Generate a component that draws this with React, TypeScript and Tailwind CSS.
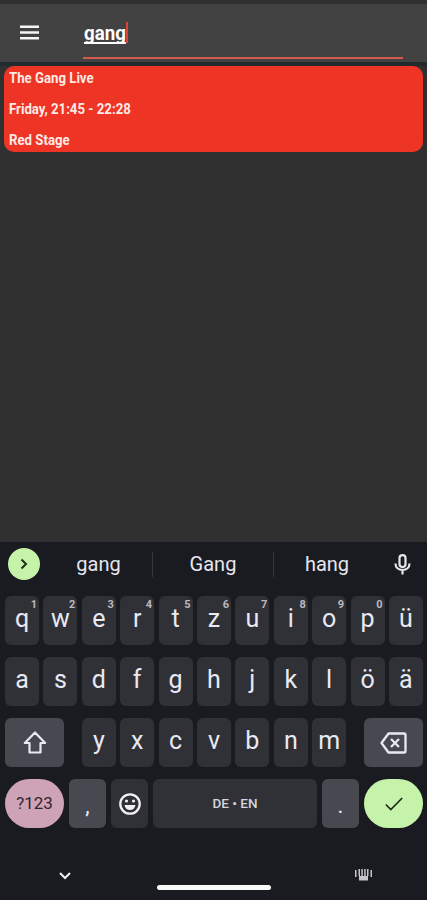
import type { ReactNode } from 'react';

const topRow = [
  { label: 'q', hint: '1' },
  { label: 'w', hint: '2' },
  { label: 'e', hint: '3' },
  { label: 'r', hint: '4' },
  { label: 't', hint: '5' },
  { label: 'z', hint: '6' },
  { label: 'u', hint: '7' },
  { label: 'i', hint: '8' },
  { label: 'o', hint: '9' },
  { label: 'p', hint: '0' },
  { label: 'ü' },
];

const homeRow = ['a', 's', 'd', 'f', 'g', 'h', 'j', 'k', 'l', 'ö', 'ä'];
const bottomRow = ['y', 'x', 'c', 'v', 'b', 'n', 'm'];

function Key({ label, hint }: { label: string; hint?: string }) {
  return (
    <div className="relative flex h-[49px] w-[34px] items-center justify-center rounded-[6px] bg-[#303136] pb-[5px] text-[25px] leading-none text-[#e9e9f3]">
      {label}
      {hint && (
        <span className="absolute right-[2px] top-[3px] text-[11px] font-bold leading-none text-[#b9b9c1]">{hint}</span>
      )}
    </div>
  );
}

function WideKey({ className, children }: { className: string; children: ReactNode }) {
  return <div className={`flex h-[49px] items-center justify-center ${className}`}>{children}</div>;
}

function AppBar() {
  return (
    <header className="flex h-[58px] bg-[#424242] pl-[20px] pr-[24px]">
      <svg className="mt-[21px] h-[15px] w-[19px]" viewBox="0 0 19 15" fill="#f5f5f5">
        <path d="M0 .5h19V3H0zM0 6.300h19v2.500H0zM0 12.100h19v2.500H0z" />
      </svg>
      <div className="ml-[44px] flex h-[55px] flex-1 border-b-2 border-[#d45b50]">
        <span className="ml-[1px] mt-[16px] h-[26px] w-[42px] whitespace-nowrap">
          <span className="inline-block origin-left scale-x-[0.89] text-[21px] font-bold leading-[26px] text-white underline decoration-2 underline-offset-[2px] [text-decoration-skip-ink:none]">
            gang
          </span>
        </span>
        <span className="mt-[18px] h-[21px] w-[2px] bg-[#d9433a]" />
      </div>
    </header>
  );
}

function ResultCard() {
  const lines = ['The Gang Live', 'Friday, 21:45 - 22:28', 'Red Stage'];
  return (
    <div className="mx-[4px] h-[86px] rounded-[10px] bg-[#ed3425] pl-[5px] pt-[3px]">
      {lines.map((line) => (
        <p key={line} className="mb-[11px] origin-left scale-x-[0.91] whitespace-nowrap text-[14.5px] font-bold leading-[20px] text-[#ffeae5]">
          {line}
        </p>
      ))}
    </div>
  );
}

function Suggestions() {
  return (
    <div className="flex h-[44px] items-center text-[20px] text-[#e6e6ef]">
      <div className="ml-[8px] flex h-[32px] w-[32px] items-center justify-center rounded-full bg-[#c5f3aa]">
        <svg className="h-[12px] w-[8px]" viewBox="0 0 8 12" fill="none" stroke="#20301b" strokeWidth="2">
          <path d="M1.500 1.500L6 6l-4.500 4.500" />
        </svg>
      </div>
      <span className="ml-[5px] w-[107px] text-center">gang</span>
      <span className="h-[25px] w-px bg-[#37383f]" />
      <span className="w-[120px] text-center">Gang</span>
      <span className="h-[25px] w-px bg-[#37383f]" />
      <span className="w-[106px] text-center">hang</span>
      <svg className="ml-[14px] h-[21px] w-[17px]" viewBox="0 0 17 21" fill="none" stroke="#e6e6ef" strokeWidth="2.200">
        <rect x="5.500" y="1.100" width="6" height="12" rx="3" />
        <path d="M1.500 9.500c0 4 3 6.500 7 6.500s7-2.500 7-6.500M8.500 16v4.500" />
      </svg>
    </div>
  );
}

function Keyboard() {
  return (
    <section className="flex h-[358px] flex-col bg-[#1a1b21]">
      <Suggestions />
      <div className="mt-[10px] flex flex-col gap-[12px] pl-[5px] pr-[4px]">
        <div className="flex justify-between">
          {topRow.map((key) => (
            <Key key={key.label} label={key.label} hint={key.hint} />
          ))}
        </div>
        <div className="flex justify-between">
          {homeRow.map((label) => (
            <Key key={label} label={label} />
          ))}
        </div>
        <div className="flex justify-between">
          <WideKey className="w-[59px] rounded-[6px] bg-[#484851]">
            <svg className="h-[23px] w-[24px]" viewBox="0 0 24 23" fill="none" stroke="#e9e9f3" strokeWidth="2.200">
              <path d="M12 1.500L1.800 12H6.500v9.500h11V12h4.700z" strokeLinejoin="round" />
            </svg>
          </WideKey>
          <div className="flex gap-[4.4px]">
            {bottomRow.map((label) => (
              <Key key={label} label={label} />
            ))}
          </div>
          <WideKey className="w-[59px] rounded-[6px] bg-[#484851]">
            <svg className="h-[22px] w-[27px]" viewBox="0 0 27 22" fill="none" stroke="#e9e9f3" strokeWidth="2.300">
              <path d="M8.500 1.500h15.500a1.500 1.500 0 011.500 1.500v16a1.500 1.500 0 01-1.500 1.500H8.500L1.500 11z" strokeLinejoin="round" />
              <path d="M11 7l8 8m0-8l-8 8" />
            </svg>
          </WideKey>
        </div>
        <div className="flex justify-between">
          <WideKey className="w-[59px] rounded-[25px] bg-[#cfa3b7] text-[17px] text-[#32232c]">?123</WideKey>
          <WideKey className="w-[37px] rounded-[6px] bg-[#484851] pt-[3px] text-[22px] text-[#e9e9f3]">,</WideKey>
          <WideKey className="w-[37px] rounded-[6px] bg-[#303136]">
            <svg className="h-[22px] w-[22px]" viewBox="0 0 22 22" fill="none">
              <circle cx="11" cy="11" r="9.700" stroke="#f0f0f6" strokeWidth="2.300" />
              <circle cx="7.500" cy="8" r="1.600" fill="#f0f0f6" />
              <circle cx="14.500" cy="8" r="1.600" fill="#f0f0f6" />
              <path d="M5.500 12h11c-.5 3-2.500 5-5.500 5s-5-2-5.500-5z" fill="#f0f0f6" />
            </svg>
          </WideKey>
          <WideKey className="w-[164px] rounded-[6px] bg-[#303136] text-[13.5px] font-medium text-[#d5d5dd]">
            DE • EN
          </WideKey>
          <WideKey className="w-[37px] rounded-[6px] bg-[#484851] pt-[3px] text-[22px] text-[#e9e9f3]">.</WideKey>
          <WideKey className="w-[59px] rounded-[25px] bg-[#c5f3aa]">
            <svg className="h-[14px] w-[18px]" viewBox="0 0 18 14" fill="none" stroke="#1d2b19" strokeWidth="1.700">
              <path d="M.8 7.500l5 5L17.200 1" />
            </svg>
          </WideKey>
        </div>
      </div>
      <NavBar />
    </section>
  );
}

function NavBar() {
  return (
    <nav className="mt-[40px] flex">
      <svg className="ml-[59px] mt-[4px] h-[8px] w-[12px]" viewBox="0 0 12 8" fill="none" stroke="#eeeeee" strokeWidth="2">
        <path d="M1 1l5 5 5-5" />
      </svg>
      <span className="ml-[86px] mt-[17px] h-[5px] w-[114px] rounded-full bg-[#f8f8f8]" />
      <svg className="ml-[84px] mt-[1px] h-[12px] w-[17px]" viewBox="0 0 17 12" fill="#c6c6ca">
        <path d="M0 1h1.500v7H0zM3.500 0H5v7H3.500zM6.300 0h1.500v7H6.300zM9.200 0h1.500v7H9.200zM12 0h1.500v7H12zM15.500 1H17v7h-1.500zM4 7h9v4.500H4z" />
      </svg>
    </nav>
  );
}

export default function App() {
  return (
    <main className="flex h-[900px] w-[427px] flex-col overflow-hidden bg-[#303030] pt-[4px] font-['Roboto',sans-serif]">
      <AppBar />
      <div className="flex-1">
        <div className="h-[4px] bg-[#222c2e]" />
        <ResultCard />
      </div>
      <Keyboard />
    </main>
  );
}
